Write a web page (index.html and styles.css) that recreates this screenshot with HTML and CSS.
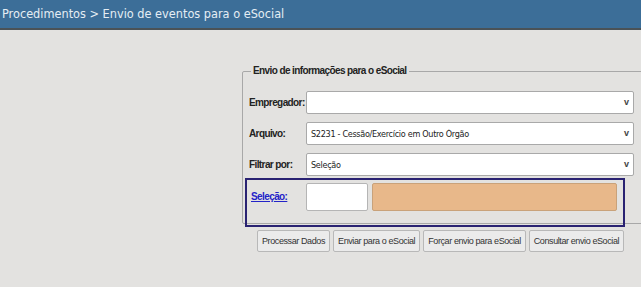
FILE: index.html
```html
<!DOCTYPE html>
<html lang="pt-BR">
<head>
  <meta charset="UTF-8">
  <title>Envio de eventos para o eSocial</title>
  <link rel="stylesheet" href="styles.css">
</head>
<body>
  <div class="topbar">Procedimentos &gt; Envio de eventos para o eSocial</div>

  <div class="content">
    <form class="envio-form">
      <fieldset class="envio-box">
        <legend>Envio de informações para o eSocial</legend>

        <div class="row">
          <label for="empregador">Empregador:</label>
          <div class="select-wrap">
            <select id="empregador"><option></option></select>
          </div>
        </div>
        <div class="row">
          <label for="arquivo">Arquivo:</label>
          <div class="select-wrap">
            <select id="arquivo"><option>S2231 - Cessão/Exercício em Outro Órgão</option></select>
          </div>
        </div>
        <div class="row">
          <label for="filtro">Filtrar por:</label>
          <div class="select-wrap">
            <select id="filtro"><option>Seleção</option></select>
          </div>
        </div>

        <div class="selecao">
          <a href="#" class="selecao-link">Seleção:</a>
          <input type="text" class="selecao-cod">
          <div class="selecao-desc"></div>
        </div>
      </fieldset>

      <div class="actions">
        <button type="button" class="btn">Processar Dados</button>
        <button type="button" class="btn">Enviar para o eSocial</button>
        <button type="button" class="btn">Forçar envio para eSocial</button>
        <button type="button" class="btn">Consultar envio eSocial</button>
      </div>
    </form>
  </div>
</body>
</html>
```

FILE: styles.css
```css
body {
  margin: 0;
  background-color: #e3e2e0;
  font-family: 'Liberation Sans', Arial, sans-serif;
  color: #222;
  overflow: hidden;
}
.topbar {
  height: 28px;
  line-height: 28px;
  padding-left: 2px;
  background-color: #3c6e98;
  border-bottom: 2px solid #4a5257;
  color: #e4edf4;
  font-family: 'DejaVu Sans Condensed', 'DejaVu Sans', sans-serif;
  font-size: 12.6px;
  white-space: nowrap;
}
.content {
  padding: 34px 0 0 242px;
}
.envio-box {
  width: 440px;
  margin: 0;
  padding: 0 0 0 2px;
  border: 1px solid #a8a8a8;
  border-radius: 2px;
}
.envio-box legend {
  margin-left: 6px;
  padding: 0 2px;
  font-size: 10px;
  line-height: 14px;
  font-weight: bold;
  letter-spacing: -0.6px;
  color: #222;
}
.row {
  display: flex;
  align-items: center;
  height: 23px;
  margin-top: 8px;
  padding-left: 4px;
}
.row:first-of-type {
  margin-top: 13px;
}
.row label,
.selecao-link {
  width: 57px;
  flex-shrink: 0;
  font-size: 10px;
  font-weight: bold;
  letter-spacing: -0.6px;
  white-space: nowrap;
}
.select-wrap {
  position: relative;
  width: 328px;
}
.select-wrap select {
  width: 100%;
  height: 23px;
  padding: 0 18px 0 4px;
  border: 1px solid #a9a9a9;
  border-radius: 2px;
  background-color: #fff;
  font-family: 'DejaVu Sans Condensed', 'DejaVu Sans', sans-serif;
  font-size: 9px;
  letter-spacing: -0.3px;
  color: #222;
  -webkit-appearance: none;
  appearance: none;
}
.select-wrap::after {
  content: "v";
  position: absolute;
  right: 5px;
  top: 6px;
  font-size: 9px;
  font-weight: bold;
  color: #444;
  pointer-events: none;
}
.selecao {
  display: flex;
  align-items: flex-start;
  width: 372px;
  margin: 2px 0 -4px 0;
  padding: 3px 0 14px 4px;
  border: 2px solid #2a2272;
}
.selecao-link {
  margin-top: 8px;
  color: #2323c8;
  text-decoration: underline;
}
.selecao-cod {
  width: 62px;
  height: 28px;
  margin: 0 4px 0 -2px;
  padding: 0;
  border: 1px solid #b5b5b5;
  border-radius: 2px;
  background-color: #fff;
  box-sizing: border-box;
}
.selecao-desc {
  width: 245px;
  height: 28px;
  border: 1px solid #c9a27a;
  border-radius: 2px;
  background-color: #e8b88a;
  box-sizing: border-box;
}
.actions {
  display: flex;
  gap: 3px;
  margin: 6px 0 0 15px;
}
.btn {
  height: 22px;
  padding: 0 4px;
  border: 1px solid #b8b8b8;
  border-radius: 2px;
  background-color: #ebebeb;
  font-family: inherit;
  font-size: 9px;
  letter-spacing: -0.4px;
  color: #333;
  white-space: nowrap;
}
```
